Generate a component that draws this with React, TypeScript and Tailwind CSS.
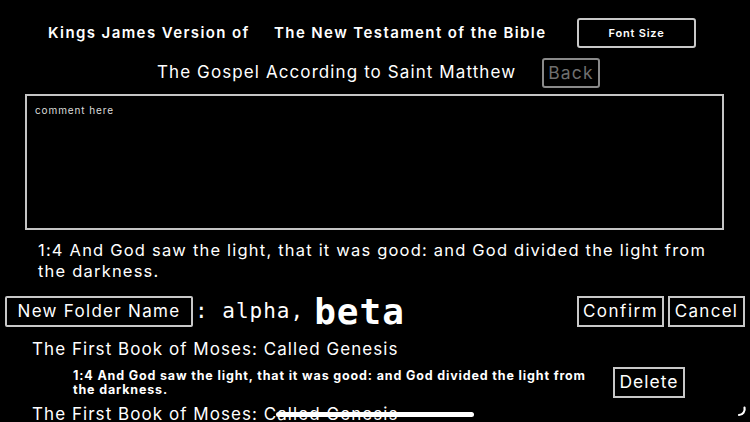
export default function App() {
  return (
    <div className="relative w-[750px] h-[422px] overflow-hidden bg-black text-white font-['Inter','Liberation_Sans',sans-serif]">
      {/* Header */}
      <div className="flex items-center h-[30px] mt-[18px]">
        <span className="ml-[48px] w-[226px] text-[15px] font-semibold tracking-[1.4px]">Kings James Version of</span>
        <span className="w-[303px] text-[15px] font-semibold tracking-[1.4px]">The New Testament of the Bible</span>
        <button className="w-[119px] h-[30px] rounded-[3px] border-2 border-[#c8c8c8] text-[11px] font-semibold tracking-[0.8px]">
          Font Size
        </button>
      </div>

      {/* Book title */}
      <div className="flex items-center h-[30px] mt-[10px]">
        <span className="ml-[157px] w-[385px] text-[17px] tracking-[1.1px]">The Gospel According to Saint Matthew</span>
        <button className="w-[58px] h-[30px] rounded-[3px] border-2 border-[#8a8a8a] text-[#6f6f6f] text-[17.5px] tracking-[1.2px]">
          Back
        </button>
      </div>

      {/* Comment box */}
      <div className="ml-[25px] mt-[6px] w-[699px] h-[136px] border-2 border-[#c4c4c4] px-[8px] leading-[24px]">
        <span className="text-[10px] text-[#dcdcdc] tracking-[0.9px]">comment here</span>
      </div>

      {/* Selected verse */}
      <p className="ml-[38px] mr-[26px] mt-[10px] text-[16.5px] leading-[21px] tracking-[1.2px]">
        1:4 And God saw the light, that it was good: and God divided the light from the darkness.
      </p>

      {/* Folder row */}
      <div className="flex items-center mt-[14px] h-[31px]">
        <button className="ml-[5px] w-[188px] h-[31px] rounded-[2px] border-2 border-[#c8c8c8] text-[17px] tracking-[1.3px]">
          New Folder Name
        </button>
        <span className="ml-[2px] whitespace-pre font-['DejaVu_Sans_Mono',monospace] text-[21px] tracking-[1px]">: alpha,</span>
        <span className="ml-[10px] font-['DejaVu_Sans_Mono',monospace] text-[36px] font-bold tracking-[1px] leading-[31px]">beta</span>
        <div className="ml-auto mr-[5px] flex gap-[4px]">
          <button className="w-[87px] h-[31px] border-2 border-[#c8c8c8] text-[17px] tracking-[1.5px]">Confirm</button>
          <button className="w-[77px] h-[31px] border-2 border-[#c8c8c8] text-[17px] tracking-[1.3px]">Cancel</button>
        </div>
      </div>

      {/* Saved list */}
      <div className="ml-[32px] mt-[12px] text-[17px] leading-[20px] tracking-[1.05px]">The First Book of Moses: Called Genesis</div>
      <div className="flex items-center mt-[8px]">
        <p className="ml-[73px] w-[520px] text-[12.5px] font-bold leading-[14px] tracking-[0.85px]">
          1:4 And God saw the light, that it was good: and God divided the light from the darkness.
        </p>
        <button className="ml-[20px] w-[72px] h-[31px] border-2 border-[#c8c8c8] text-[17.5px] tracking-[1px]">Delete</button>
      </div>
      <div className="ml-[32px] mt-[6px] text-[17px] leading-[20px] tracking-[1.05px]">The First Book of Moses: Called Genesis</div>

      {/* Home indicator */}
      <div className="absolute left-[276px] top-[412px] w-[198px] h-[5px] rounded-full bg-white" />

      {/* Spinner */}
      <svg className="absolute left-[733px] top-[404px]" width="14" height="14" viewBox="0 0 14 14">
        <path d="M11.5 3.5 A6 6 0 0 1 6 11" fill="none" stroke="white" strokeWidth="2.2" strokeLinecap="round" />
      </svg>
    </div>
  );
}
